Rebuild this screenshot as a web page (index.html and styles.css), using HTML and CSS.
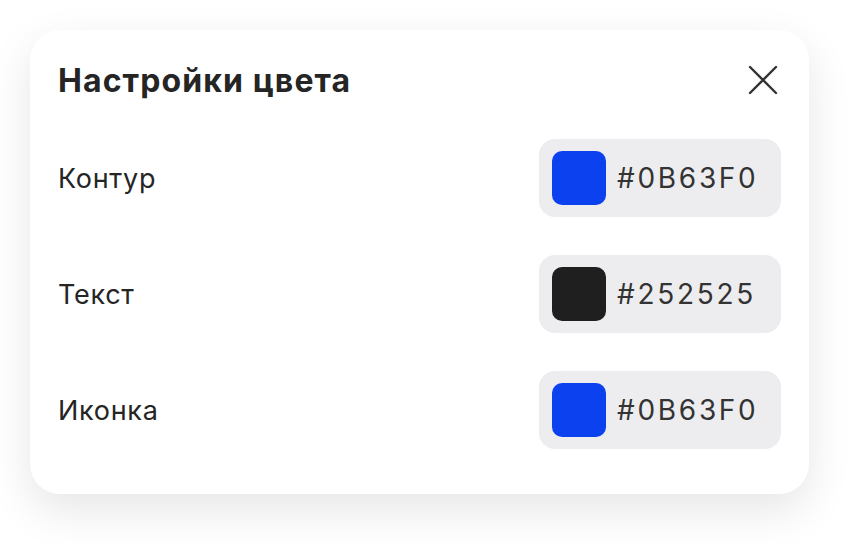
FILE: index.html
```html
<!DOCTYPE html>
<html>
<head>
  <title>Настройки цвета</title>
  <link rel="stylesheet" href="styles.css">
</head>
<body>
  <div class="panel">
    <div class="panel-head">
      <h2>Настройки цвета</h2>
      <button class="close-btn" aria-label="Закрыть">
        <svg width="30" height="30" viewBox="0 0 30 30">
          <path d="M2 2 L28 28 M28 2 L2 28" stroke="#333" stroke-width="2.4" stroke-linecap="round" fill="none"/>
        </svg>
      </button>
    </div>

    <div class="color-row">
      <span class="row-label">Контур</span>
      <div class="color-chip">
        <span class="swatch swatch-blue"></span>
        <span class="hex">#0B63F0</span>
      </div>
    </div>

    <div class="color-row">
      <span class="row-label">Текст</span>
      <div class="color-chip">
        <span class="swatch swatch-dark"></span>
        <span class="hex">#252525</span>
      </div>
    </div>

    <div class="color-row">
      <span class="row-label">Иконка</span>
      <div class="color-chip">
        <span class="swatch swatch-blue"></span>
        <span class="hex">#0B63F0</span>
      </div>
    </div>
  </div>
</body>
</html>
```

FILE: styles.css
```css
body {
  font-family: Inter, "Noto Sans", sans-serif;
  margin: 0;
  padding: 30px;
  min-height: 100vh;
  background-color: #fff;
  color: #252525;
  box-sizing: border-box;
}

.panel {
  width: 779px;
  padding: 22px 28px 45px 28px;
  background-color: white;
  border-radius: 30px;
  box-shadow: 0 16px 44px rgba(0, 0, 0, 0.1);
  box-sizing: border-box;
}

.panel-head {
  display: flex;
  align-items: center;
  justify-content: space-between;
  height: 56px;
  margin-bottom: 31px;
}

h2 {
  margin: 0;
  font-size: 32px;
  font-weight: 700;
  letter-spacing: 1.1px;
  color: #252525;
}

.close-btn {
  background: none;
  border: none;
  padding: 0;
  margin-right: 3px;
  width: 30px;
  height: 30px;
  cursor: pointer;
}

.color-row {
  display: flex;
  align-items: center;
  justify-content: space-between;
  margin-bottom: 38px;
}

.color-row:last-child {
  margin-bottom: 0;
}

.row-label {
  font-size: 27px;
  letter-spacing: 0.7px;
}

.color-chip {
  display: flex;
  align-items: center;
  gap: 11px;
  width: 242px;
  height: 78px;
  padding: 0 13px;
  background-color: #ededf0;
  border-radius: 16px;
  box-sizing: border-box;
}

.swatch {
  width: 54px;
  height: 54px;
  border-radius: 10px;
}

.swatch-blue { background-color: #0c41ef; }
.swatch-dark { background-color: #1f1f1f; }

.hex {
  font-size: 28px;
  letter-spacing: 2.7px;
  color: #333;
}
```
